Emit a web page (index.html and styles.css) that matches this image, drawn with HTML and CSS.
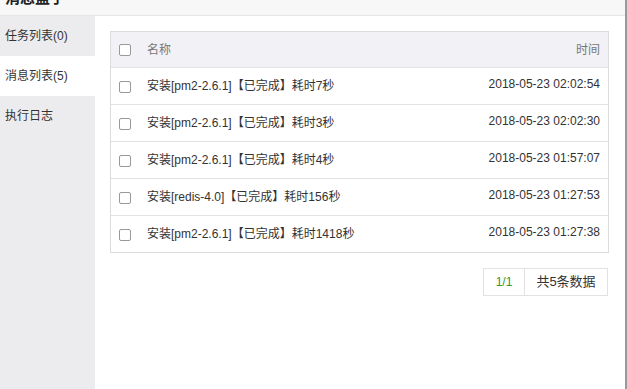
FILE: index.html
```html
<!DOCTYPE html>
<html lang="zh">

<head>
    <meta charset="UTF-8">
    <meta name="viewport" content="width=device-width, initial-scale=1.0">
    <title>消息盒子</title>
    <link rel="stylesheet" href="styles.css">
</head>

<body>
    <div class="window">
        <div class="title">
            <span>消息盒子</span>
        </div>
        <div class="main">
            <div class="side">
                <div class="tab">任务列表(0)</div>
                <div class="tab active">消息列表(5)</div>
                <div class="tab">执行日志</div>
            </div>
            <div class="content">
                <div class="table">
                    <div class="row head">
                        <span class="check"></span>
                        <span class="name">名称</span>
                        <span class="time">时间</span>
                    </div>
                    <div class="row">
                        <span class="check"></span>
                        <span class="name">安装[pm2-2.6.1]【已完成】耗时7秒</span>
                        <span class="time">2018-05-23 02:02:54</span>
                    </div>
                    <div class="row">
                        <span class="check"></span>
                        <span class="name">安装[pm2-2.6.1]【已完成】耗时3秒</span>
                        <span class="time">2018-05-23 02:02:30</span>
                    </div>
                    <div class="row">
                        <span class="check"></span>
                        <span class="name">安装[pm2-2.6.1]【已完成】耗时4秒</span>
                        <span class="time">2018-05-23 01:57:07</span>
                    </div>
                    <div class="row">
                        <span class="check"></span>
                        <span class="name">安装[redis-4.0]【已完成】耗时156秒</span>
                        <span class="time">2018-05-23 01:27:53</span>
                    </div>
                    <div class="row">
                        <span class="check"></span>
                        <span class="name">安装[pm2-2.6.1]【已完成】耗时1418秒</span>
                        <span class="time">2018-05-23 01:27:38</span>
                    </div>
                </div>
                <div class="pager">
                    <span class="page">1/1</span>
                    <span class="total">共5条数据</span>
                </div>
            </div>
        </div>
    </div>
</body>

</html>
```

FILE: styles.css
```css
* {
    margin: 0px;
    padding: 0px;
    box-sizing: border-box;
}

html,
body {
    height: 100%;
}

body {
    font-family: "Liberation Sans", Arial, "Noto Sans CJK SC", sans-serif;
    font-size: 12px;
    color: #333;
    background: #fff;
}

.window {
    height: 100%;
    display: flex;
    flex-direction: column;
    border-right: 2px solid #9a9a9a;
}

.title {
    height: 16px;
    background: #f7f7f7;
    border-bottom: 1px solid #e6e6e6;
    overflow: hidden;
    padding-left: 5px;
}

.title span {
    display: block;
    margin-top: -13px;
    font-size: 15px;
    line-height: 22px;
    font-weight: bold;
    color: #222;
}

.main {
    flex: 1;
    display: flex;
}

.side {
    width: 95px;
    background: #ececee;
}

.side .tab {
    height: 40px;
    line-height: 40px;
    padding-left: 5px;
    color: #333;
}

.side .tab.active {
    background: #fff;
}

.content {
    flex: 1;
    padding: 15px 16px 15px 15px;
}

.table {
    border: 1px solid #dcdcdc;
}

.row {
    display: flex;
    align-items: center;
    height: 37px;
    border-top: 1px solid #e2e2e2;
    padding: 0 8px;
}

.row.head {
    height: 35px;
    border-top: none;
    background: #f2f2f6;
    color: #777;
}

.row .check {
    width: 12px;
    height: 12px;
    border: 1px solid #999;
    border-radius: 2px;
    background: #fff;
    margin-top: 2px;
}

.row.head .check {
    margin-top: 0;
}

.row .name {
    flex: 1;
    margin-left: 16px;
}

.row .name,
.row .time {
    padding-bottom: 4px;
}

.row.head .name,
.row.head .time {
    padding-bottom: 2px;
}

.row .time {
    text-align: right;
}

.pager {
    display: flex;
    justify-content: flex-end;
    margin-top: 15px;
    margin-right: 1px;
}

.pager span {
    height: 28px;
    line-height: 26px;
    border: 1px solid #e2e2e2;
    color: #333;
    text-align: center;
}

.pager .page {
    color: #2a9a3a;
    width: 42px;
}

.pager .total {
    border-left: none;
    width: 83px;
    font-size: 13px;
}
```
